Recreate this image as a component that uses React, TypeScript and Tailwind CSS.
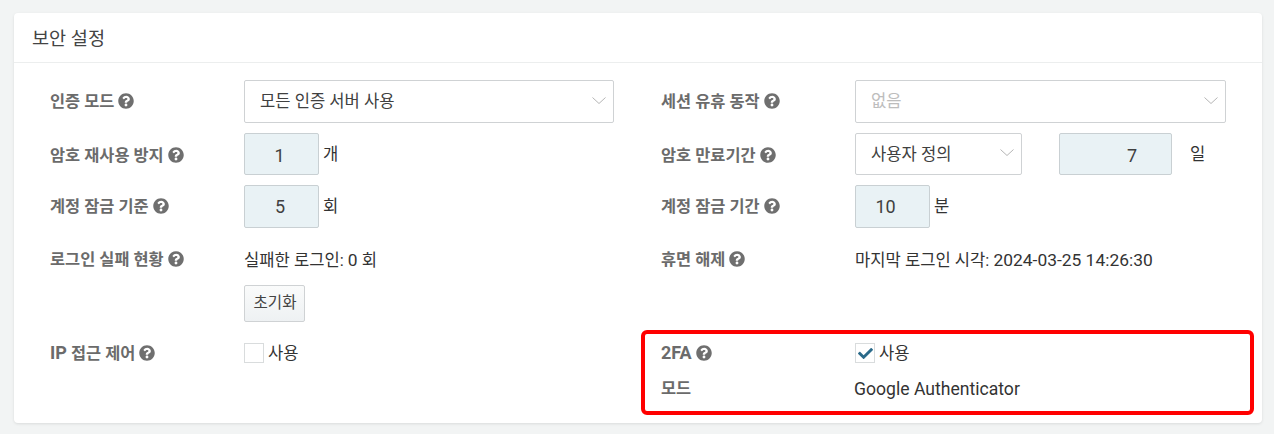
import React from "react";
import { FaQuestionCircle, FaCheck } from "react-icons/fa";

const Q = () => <FaQuestionCircle className="inline-block ml-[4px] text-[#6f6f6f] w-[16px] h-[16px] align-[-2px]" />;

const Label = ({ text, help = true, latin, low }: { text: string; help?: boolean; latin?: string; low?: boolean }) => (
  <div className={`w-[194px] shrink-0 font-bold text-[#6b6b6b] leading-[24px] text-[16.4px] ${low ? "pt-[3px]" : ""}`}>
    {latin && <span className="text-[18px]">{latin}</span>}
    {latin && text ? " " : ""}
    {text}
    {help && <Q />}
  </div>
);

const Chevron = () => (
  <svg viewBox="0 0 14 7" className="w-[14px] h-[7px] shrink-0 mb-[3px]" fill="none" stroke="#b5b5b5" strokeWidth="1">
    <path d="M0.5 0.5 L7 6.5 L13.5 0.5" />
  </svg>
);

const Select = ({ text, w, muted }: { text: string; w: string; muted?: boolean }) => (
  <div className={`${w} flex items-center justify-between border border-[#cfd2d4] rounded-[2px] bg-white pl-[15px] pr-[7px] ${muted ? "text-[#bdbdbd]" : "text-[#404040]"}`}>
    <span className="pt-[2px]">{text}</span>
    <Chevron />
  </div>
);

const Num = ({ v, w, cls }: { v: string; w: string; cls: string }) => (
  <div className={`${w} h-full flex items-center border border-[#c9d0d3] rounded-[2px] bg-[#e9f2f5] text-[#404040] text-[18px] ${cls}`}>{v}</div>
);

export default function App() {
  return (
    <div className="w-[1274px] h-[434px] bg-[#f2f4f4] pt-[13px] pl-[14px] relative overflow-hidden text-[16.6px] text-[#333] [font-family:Roboto,'Noto_Sans_CJK_KR',sans-serif]">
      <div className="w-[1248px] h-[410px] bg-white rounded-[4px] shadow-[0_1px_3px_rgba(0,0,0,0.1)]">
        <div className="h-[50px] border-b border-[#eceeee] pl-[18px] pt-[13px] text-[18.6px] leading-[26px] text-[#444]">보안 설정</div>
        <div className="pl-[36px] pt-[17px] flex flex-col">
          <div className="flex h-[43px]">
            <div className="w-[611px] flex items-center">
              <Label text="인증 모드" />
              <Select text="모든 인증 서버 사용" w="w-[370px] h-full" />
            </div>
            <div className="flex items-center">
              <Label text="세션 유휴 동작" />
              <Select text="없음" w="w-[371px] h-full" muted />
            </div>
          </div>
          <div className="flex h-[42px] mt-[10px]">
            <div className="w-[611px] flex items-center">
              <Label text="암호 재사용 방지" low />
              <Num v="1" w="w-[75px]" cls="justify-center pr-[4px] pt-[2px]" />
              <span className="ml-[4px] pt-[3px]">개</span>
            </div>
            <div className="flex items-center">
              <Label text="암호 만료기간" low />
              <Select text="사용자 정의" w="w-[167px] h-full" />
              <Num v="7" w="w-[113px] ml-[37px]" cls="justify-center pl-[33px] pt-[2px]" />
              <span className="ml-[18px] pt-[3px]">일</span>
            </div>
          </div>
          <div className="flex h-[43px] mt-[10px]">
            <div className="w-[611px] flex items-center">
              <Label text="계정 잠금 기준" />
              <Num v="5" w="w-[75px]" cls="justify-center pr-[3px]" />
              <span className="ml-[4px] pt-[2px]">회</span>
            </div>
            <div className="flex items-center">
              <Label text="계정 잠금 기간" />
              <Num v="10" w="w-[75px]" cls="justify-center pr-[14px]" />
              <span className="ml-[4px] pt-[2px]">분</span>
            </div>
          </div>
          <div className="flex mt-[20px] h-[74px]">
            <div className="w-[611px] flex items-start">
              <Label text="로그인 실패 현황" />
              <div className="flex flex-col items-start">
                <span className="leading-[24px]">실패한 로그인: <span className="text-[17.4px]">0</span> 회</span>
                <button className="mt-[12px] w-[61px] h-[37px] border border-[#cfd2d4] rounded-[2px] bg-gradient-to-b from-[#fafbfb] to-[#eef1f3] text-[15.6px] text-[#444] pl-[1px]">초기화</button>
              </div>
            </div>
            <div className="flex items-start">
              <Label text="휴면 해제" />
              <span className="leading-[24px]">마지막 로그인 시각: <span className="text-[17.4px]">2024-03-25 14:26:30</span></span>
            </div>
          </div>
          <div className="flex mt-[19px]">
            <div className="w-[611px] flex items-center h-[24px]">
              <Label text="접근 제어" latin="IP" />
              <span className="w-[20px] h-[20px] border border-[#d9dcdd] bg-white" />
              <span className="ml-[4px] pt-[2px]">사용</span>
            </div>
            <div className="flex flex-col">
              <div className="flex items-center h-[24px]">
                <Label text="" latin="2FA" />
                <span className="w-[20px] h-[20px] border border-[#d9dcdd] bg-white flex items-center justify-center">
                  <FaCheck className="w-[15px] h-[15px] text-[#2a6a8a]" />
                </span>
                <span className="ml-[4px] pt-[2px]">사용</span>
              </div>
              <div className="flex items-center h-[24px] mt-[12px]">
                <Label text="모드" help={false} />
                <span className="text-[17.6px] -ml-[1px]">Google Authenticator</span>
              </div>
            </div>
          </div>
        </div>
      </div>
      <div className="absolute left-[641px] top-[330px] w-[613px] h-[85px] border-[4px] border-[#ff0000] rounded-[6px]" />
    </div>
  );
}
